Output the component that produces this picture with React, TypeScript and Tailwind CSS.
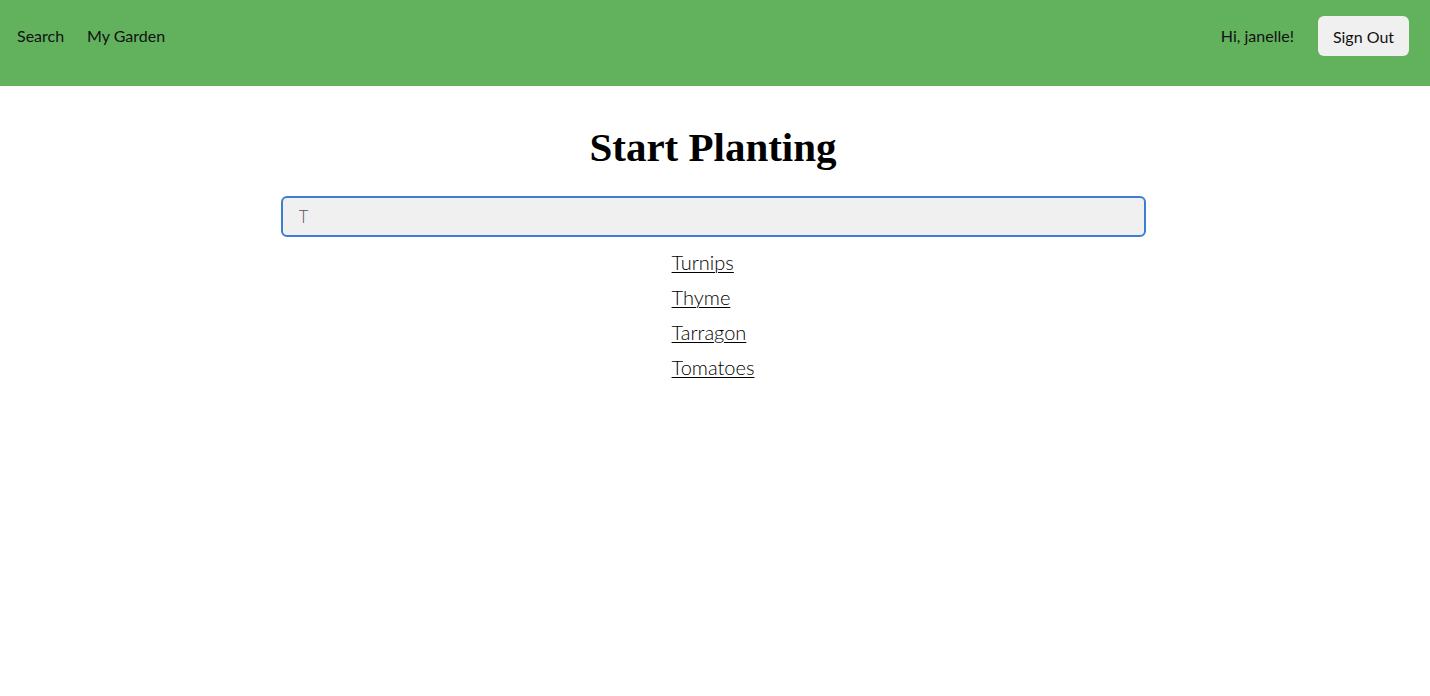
import { useState } from "react";

const results = ["Turnips", "Thyme", "Tarragon", "Tomatoes"];

export default function App() {
  const [query, setQuery] = useState("T");

  return (
    <div className="min-h-screen bg-white font-['Lato','Open_Sans',sans-serif] text-black">
      <nav className="flex h-[86px] items-start justify-between bg-[#62b25d] pl-[17px] pr-[21px] pt-[16px]">
        <div className="flex h-[40px] items-center gap-[23px] text-[16px] text-[#111]">
          <a href="#">Search</a>
          <a href="#">My Garden</a>
        </div>
        <div className="flex h-[40px] items-center gap-[24px] text-[16px] text-[#111]">
          <span className="pl-[3px]">Hi, janelle!</span>
          <button className="h-[40px] w-[91px] rounded-[6px] bg-[#f0f0f0] pt-[2px] text-[16px] text-[#111]">
            Sign Out
          </button>
        </div>
      </nav>

      <main className="flex flex-col items-center pr-[4px]">
        <h1 className="mt-[38px] font-['Liberation_Serif',serif] text-[41px] font-bold leading-[46px]">
          Start Planting
        </h1>
        <input
          value={query}
          onChange={(e) => setQuery(e.target.value)}
          className="mt-[26px] h-[41px] w-[865px] rounded-[6px] border-2 border-[#3c7fd0] bg-[#f0f0f0] px-[16px] text-[17px] font-light text-[#555] caret-black outline-none"
        />
        <ul className="mt-[8px] flex flex-col items-start text-[20px] font-light leading-[35px]">
          {results.map((r) => (
            <li key={r}>
              <a href="#" className="underline decoration-1 underline-offset-[2px]">
                {r}
              </a>
            </li>
          ))}
        </ul>
      </main>
    </div>
  );
}
